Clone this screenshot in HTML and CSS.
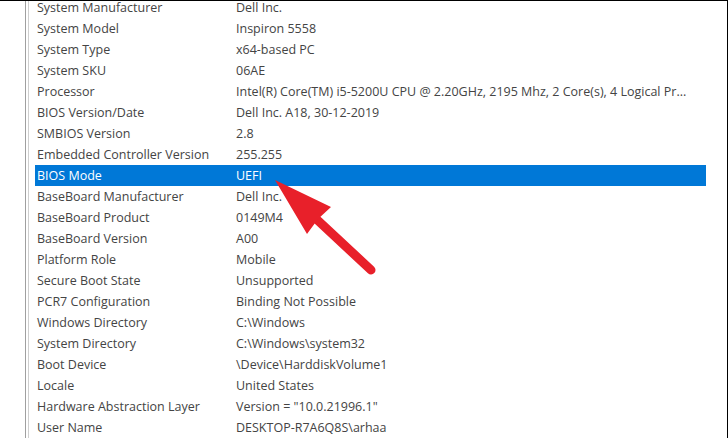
FILE: index.html
```html
<!DOCTYPE html>
<html>
<head>
<meta charset="utf-8">
<link rel="stylesheet" href="styles.css">
</head>
<body>
<div class="frame">
  <div class="pane">
    <div class="list">
      <div class="row"><span class="k">System Manufacturer</span><span class="v">Dell Inc.</span></div>
      <div class="row"><span class="k">System Model</span><span class="v">Inspiron 5558</span></div>
      <div class="row"><span class="k">System Type</span><span class="v">x64-based PC</span></div>
      <div class="row"><span class="k">System SKU</span><span class="v">06AE</span></div>
      <div class="row"><span class="k">Processor</span><span class="v">Intel(R) Core(TM) i5-5200U CPU @ 2.20GHz, 2195 Mhz, 2 Core(s), 4 Logical Pr...</span></div>
      <div class="row"><span class="k">BIOS Version/Date</span><span class="v">Dell Inc. A18, 30-12-2019</span></div>
      <div class="row"><span class="k">SMBIOS Version</span><span class="v">2.8</span></div>
      <div class="row"><span class="k">Embedded Controller Version</span><span class="v">255.255</span></div>
      <div class="row sel"><span class="k">BIOS Mode</span><span class="v">UEFI</span></div>
      <div class="row"><span class="k">BaseBoard Manufacturer</span><span class="v">Dell Inc.</span></div>
      <div class="row"><span class="k">BaseBoard Product</span><span class="v">0149M4</span></div>
      <div class="row"><span class="k">BaseBoard Version</span><span class="v">A00</span></div>
      <div class="row"><span class="k">Platform Role</span><span class="v">Mobile</span></div>
      <div class="row"><span class="k">Secure Boot State</span><span class="v">Unsupported</span></div>
      <div class="row"><span class="k">PCR7 Configuration</span><span class="v">Binding Not Possible</span></div>
      <div class="row"><span class="k">Windows Directory</span><span class="v">C:\Windows</span></div>
      <div class="row"><span class="k">System Directory</span><span class="v">C:\Windows\system32</span></div>
      <div class="row"><span class="k">Boot Device</span><span class="v">\Device\HarddiskVolume1</span></div>
      <div class="row"><span class="k">Locale</span><span class="v">United States</span></div>
      <div class="row"><span class="k">Hardware Abstraction Layer</span><span class="v">Version = "10.0.21996.1"</span></div>
      <div class="row"><span class="k">User Name</span><span class="v">DESKTOP-R7A6Q8S\arhaa</span></div>
    </div>
  </div>
  <svg class="arrow" width="728" height="438" viewBox="0 0 728 438">
    <line x1="312" y1="215" x2="371" y2="270" stroke="#e8202a" stroke-width="9" stroke-linecap="round"/>
    <polygon points="275,180 331,207 318,219 307,234" fill="#e8202a"/>
  </svg>
</div>
</body>
</html>
```
FILE: styles.css
```css
html, body {
  margin: 0;
  padding: 0;
  background: #fff;
}
.frame {
  position: relative;
  width: 727px;
  height: 437px;
  border-top: 1px solid #000;
  border-right: 1px solid #000;
  border-bottom: 1px solid #000;
  overflow: hidden;
  background: #fff;
}
.pane {
  margin-left: 25px;
  height: 100%;
  border-left: 1px solid #a0a0a0;
  display: flex;
}
.list {
  margin-left: 2px;
  border-left: 1px solid #cfcfcf;
  padding-left: 6px;
  margin-top: -4px;
  width: 671px;
}
.row {
  display: flex;
  height: 21px;
  align-items: center;
  padding-left: 2px;
  font-family: "Open Sans", "Noto Sans", sans-serif;
  font-size: 12.5px;
  color: #444;
  white-space: nowrap;
}
.row .k {
  width: 199px;
  flex: none;
}
.row.sel {
  background: #0078d7;
  color: #fff;
}
.arrow {
  position: absolute;
  left: 0;
  top: -1px;
}
```
